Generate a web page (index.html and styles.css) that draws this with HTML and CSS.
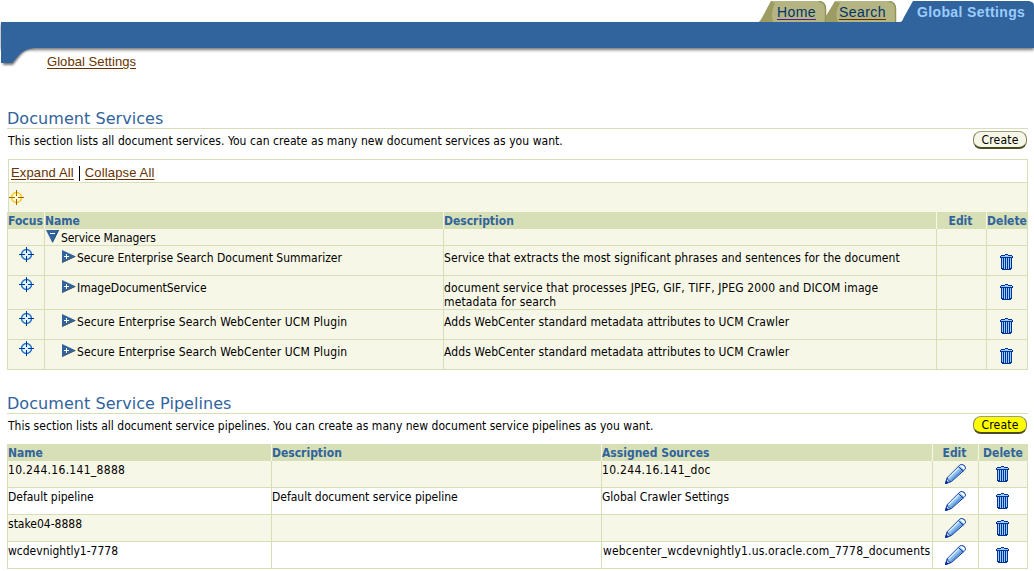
FILE: index.html
```
<!DOCTYPE html>
<html lang="en">
<head>
    <meta charset="UTF-8">
    <title>Global Settings</title>
    <link rel="stylesheet" href="styles.css">
</head>
<body>
    <!-- shared icons -->
    <svg class="defs" width="0" height="0">
        <symbol id="target" viewBox="0 0 15 15">
            <circle cx="7.5" cy="7.5" r="5" class="ring" stroke-width="1.4"/>
            <path d="M7.5 0v6M7.5 9v6M0 7.5h6M9 7.5h6" class="cross"/>
        </symbol>
        <symbol id="trash" viewBox="0 0 13 16">
            <g shape-rendering="crispEdges">
                <path d="M1 4h11v11h-1v1H2v-1H1z" fill="#003399"/>
                <path d="M2 4h1v10H2zM4 4h1v11H4zM6 4h1v11H6zM8 4h1v11H8zM10 4h1v10h-1z" fill="#99ccff"/>
                <path d="M5 0h3v1h4v1h1v2H0V2h1V1h4z" fill="#003399"/>
                <path d="M1 2h11v1H1zM5 1h3v1H5z" fill="#99ccff"/>
            </g>
        </symbol>
        <symbol id="pencil" viewBox="0 0 21 20">
            <path d="M.5 19.500l1.800-6L14.500 1.300q1-.9 2.300-.8 3.400.4 3.700 3.200 0 1.300-.9 2.100L6.500 17.500z" fill="#8cbdf0" stroke="#10399c"/>
            <path d="M3.500 13.800L15 2.600" stroke="#d6ebff" stroke-width="1.500"/>
            <path d="M6 16.500L17.500 5.500" stroke="#5a94d6" stroke-width="1.500"/>
            <path d="M14.800 1.800q1-.9 2.200-.6 2.600.6 2.800 2.800 0 1-.8 1.700z" fill="#fff"/>
            <path d="M13.300 2.500l5 4.500" stroke="#10399c"/>
            <path d="M.8 19.200l1.500-5 1.200 2.300 2.500.8z" fill="#e7f3ff" stroke="#10399c" stroke-width=".8"/>
            <path d="M0 20l1-4 3 3z" fill="#003399"/>
        </symbol>
        <symbol id="plus" viewBox="0 0 14 13">
            <path d="M0 0L14 6.500L0 13z" fill="#31639c"/>
            <path d="M0 12.500L13 6.500" stroke="#4a5a6b"/>
            <path d="M2 6.500h5M4.500 4v5" stroke="#fff"/>
        </symbol>
        <symbol id="minus" viewBox="0 0 13 13">
            <path d="M0 0H13L6.500 13z" fill="#31639c"/>
            <path d="M12.500 0L6.500 12" stroke="#214a7b"/>
            <path d="M4 3.500h5" stroke="#fff"/>
        </symbol>
    </svg>

    <div class="tabs">
        <a class="tab home" href="#">
            <svg width="68" height="21"><path d="M0 21Q2 19 3 17L12 0H60Q67 1 67 8V21z" fill="#b5b584"/><path d="M0 21Q2 19 3 17L12 0L16 2Q11 12 14 21z" fill="#9c9c63"/><path d="M60 .5Q66.500 1 66.500 8V21" fill="none" stroke="#94945a" stroke-width="1.500"/></svg>
            <span>Home</span>
        </a>
        <a class="tab search" href="#">
            <svg width="71" height="21"><path d="M0 21V15L4 9L11 0H63Q70 1 70 8V21z" fill="#b5b584"/><path d="M0 21V15L3 10L9 0L14 2Q8 12 12 21z" fill="#9c9c63"/><path d="M63 .5Q69.500 1 69.500 8V21" fill="none" stroke="#94945a" stroke-width="1.500"/></svg>
            <span>Search</span>
        </a>
        <a class="tab current" href="#">
            <svg width="133" height="21"><path d="M0 21Q2 19 3 16L12 0H128Q133 1 133 4V21z" fill="#31639c"/></svg>
            <span>Global Settings</span>
        </a>
    </div>
    <div class="band"></div>
    <div class="crumbs">
        <svg class="corner" width="36" height="20">
            <defs><filter id="soft"><feGaussianBlur stdDeviation="1.200"/></filter></defs>
            <path d="M2 0H36Q26 0 20 7Q15 13 12 17H2z" fill="#777" filter="url(#soft)"/>
            <path d="M0 0H33Q23 1 17 8Q13 13 11 15H0z" fill="#31639c"/>
        </svg>
        <a href="#">Global Settings</a>
    </div>

    <div class="section services">
        <h2>Document Services</h2>
        <div class="intro">
            <p>This section lists all document services. You can create as many new document services as you want.</p>
            <button>Create</button>
        </div>
        <div class="tree-bar"><a href="#">Expand All</a><i></i><a href="#">Collapse All</a></div>
        <div class="focus-bar"><svg class="target gold" width="15" height="15"><use href="#target"/></svg></div>
        <table>
            <colgroup><col class="s1"><col class="s2"><col class="s3"><col class="s4"><col class="s5"></colgroup>
            <tr><th class="first">Focus</th><th>Name</th><th>Description</th><th class="mid">Edit</th><th class="mid">Delete</th></tr>
            <tr class="root">
                <td></td>
                <td><div class="node"><svg width="13" height="13"><use href="#minus"/></svg><span>Service Managers</span></div></td>
                <td></td><td></td><td></td>
            </tr>
            <tr>
                <td class="mid"><svg class="target" width="15" height="15"><use href="#target"/></svg></td>
                <td><div class="node child"><svg width="14" height="13"><use href="#plus"/></svg><span>Secure Enterprise Search Document Summarizer</span></div></td>
                <td><p>Service that extracts the most significant phrases and sentences for the document</p></td>
                <td></td>
                <td class="mid"><svg class="trash" width="13" height="16"><use href="#trash"/></svg></td>
            </tr>
            <tr class="tall">
                <td class="mid"><svg class="target" width="15" height="15"><use href="#target"/></svg></td>
                <td><div class="node child"><svg width="14" height="13"><use href="#plus"/></svg><span>ImageDocumentService</span></div></td>
                <td><p class="wide">document service that processes JPEG, GIF, TIFF, JPEG 2000 and DICOM image<br>metadata for search</p></td>
                <td></td>
                <td class="mid"><svg class="trash" width="13" height="16"><use href="#trash"/></svg></td>
            </tr>
            <tr>
                <td class="mid"><svg class="target" width="15" height="15"><use href="#target"/></svg></td>
                <td><div class="node child"><svg width="14" height="13"><use href="#plus"/></svg><span class="wide">Secure Enterprise Search WebCenter UCM Plugin</span></div></td>
                <td><p>Adds WebCenter standard metadata attributes to UCM Crawler</p></td>
                <td></td>
                <td class="mid"><svg class="trash" width="13" height="16"><use href="#trash"/></svg></td>
            </tr>
            <tr>
                <td class="mid"><svg class="target" width="15" height="15"><use href="#target"/></svg></td>
                <td><div class="node child"><svg width="14" height="13"><use href="#plus"/></svg><span class="wide">Secure Enterprise Search WebCenter UCM Plugin</span></div></td>
                <td><p>Adds WebCenter standard metadata attributes to UCM Crawler</p></td>
                <td></td>
                <td class="mid"><svg class="trash" width="13" height="16"><use href="#trash"/></svg></td>
            </tr>
        </table>
    </div>

    <div class="section pipelines">
        <h2>Document Service Pipelines</h2>
        <div class="intro">
            <p>This section lists all document service pipelines. You can create as many new document service pipelines as you want.</p>
            <button class="marked">Create</button>
        </div>
        <table>
            <colgroup><col class="p1"><col class="p2"><col class="p3"><col class="p4"><col class="p5"></colgroup>
            <tr><th class="first">Name</th><th>Description</th><th>Assigned Sources</th><th class="mid">Edit</th><th class="mid">Delete</th></tr>
            <tr>
                <td class="num">10.244.16.141_8888</td><td></td><td class="num">10.244.16.141_doc</td>
                <td class="mid"><svg class="pencil" width="21" height="20"><use href="#pencil"/></svg></td>
                <td class="mid"><svg class="trash" width="13" height="16"><use href="#trash"/></svg></td>
            </tr>
            <tr>
                <td>Default pipeline</td><td>Default document service pipeline</td><td>Global Crawler Settings</td>
                <td class="mid"><svg class="pencil" width="21" height="20"><use href="#pencil"/></svg></td>
                <td class="mid"><svg class="trash" width="13" height="16"><use href="#trash"/></svg></td>
            </tr>
            <tr>
                <td>stake04-8888</td><td></td><td></td>
                <td class="mid"><svg class="pencil" width="21" height="20"><use href="#pencil"/></svg></td>
                <td class="mid"><svg class="trash" width="13" height="16"><use href="#trash"/></svg></td>
            </tr>
            <tr>
                <td>wcdevnightly1-7778</td><td></td><td class="long">webcenter_wcdevnightly1.us.oracle.com_7778_documents</td>
                <td class="mid"><svg class="pencil" width="21" height="20"><use href="#pencil"/></svg></td>
                <td class="mid"><svg class="trash" width="13" height="16"><use href="#trash"/></svg></td>
            </tr>
        </table>
    </div>
</body>
</html>
```
FILE: styles.css
```
* {
    box-sizing: border-box;
}

body {
    margin: 0;
    height: 571px;
    overflow: hidden;
    background: #fff;
    color: #000;
    font: 12px/14px "DejaVu Sans Condensed", "DejaVu Sans", sans-serif;
    font-stretch: condensed;
}

svg {
    display: block;
}

p {
    margin: 0;
}

.defs {
    position: absolute;
}

a {
    color: #663300;
    font-family: "Liberation Sans", Arial, sans-serif;
    text-underline-offset: 2px;
}

/* tabs and blue band */
.tabs {
    display: flex;
    height: 22px;
    padding: 1px 0 0 759px;
}

.tab {
    position: relative;
    height: 21px;
    font-size: 14px;
    line-height: 22px;
    color: #003366;
    white-space: nowrap;
}

.tab svg {
    position: absolute;
    left: 0;
    top: 0;
}

.tab span {
    position: relative;
}

.home {
    width: 67px;
    padding-left: 18px;
    letter-spacing: .4px;
    text-decoration-color: #551a8b;
}

.search {
    width: 75px;
    padding-left: 13px;
    letter-spacing: .45px;
    text-decoration-color: #663300;
}

.current {
    width: 133px;
    padding-left: 16px;
    color: #99ccff;
    font-weight: bold;
    letter-spacing: .37px;
    text-decoration: none;
}

.band {
    height: 26px;
    margin-left: 1px;
    background: #31639c;
    box-shadow: 0 2px 3px #777;
}

.crumbs {
    position: relative;
    height: 60px;
    padding: 6px 0 0 47px;
    font-size: 13px;
    line-height: 15px;
    letter-spacing: .06px;
}

.corner {
    position: absolute;
    left: 1px;
    top: 0;
}

/* sections */
.section {
    width: 1021px;
    margin-left: 7px;
}

.services {
    height: 285px;
}

h2 {
    height: 21px;
    margin: 0;
    border-bottom: 1px solid #d6dfb5;
    color: #31639c;
    font-family: "DejaVu Sans", sans-serif;
    font-size: 16px;
    font-stretch: normal;
    font-weight: normal;
    line-height: 22px;
    letter-spacing: .05px;
}

.intro {
    display: flex;
    justify-content: space-between;
    height: 30px;
    padding: 2px 1px 0 1px;
}

.intro p {
    padding-top: 3px;
    letter-spacing: .05px;
    white-space: nowrap;
}

.pipelines .intro p {
    letter-spacing: .025px;
}

button {
    width: 54px;
    height: 18px;
    padding: 0;
    border: 1px solid #84845a;
    border-top-color: #9c9c84;
    border-bottom: 2px solid #4a4a21;
    border-radius: 8px;
    background: #f7f7e7;
    color: #000;
    font: inherit;
    line-height: 14px;
    letter-spacing: .2px;
}

button.marked {
    background: #ffff00;
}

.tree-bar {
    display: flex;
    height: 24px;
    margin-left: 1px;
    padding: 5px 0 0 2px;
    border: 1px solid #d6dfb5;
    font-size: 13px;
    line-height: 16px;
    letter-spacing: .14px;
}

.tree-bar i {
    width: 1px;
    height: 15px;
    margin: 1px 5px 0;
    background: #000;
}

.focus-bar {
    height: 29px;
    margin-left: 1px;
    padding-top: 7px;
    border: solid #d6dfb5;
    border-width: 0 1px;
    background: #f7f7e7;
}

.target {
    margin: 1px auto 0;
}

.focus-bar .target {
    margin: 0;
}

.ring {
    fill: var(--ring-fill, #dff3ff);
    stroke: var(--ring, #2173c6);
}

.cross {
    stroke: var(--cross, #003399);
}

.gold {
    --ring-fill: #ffffce;
    --ring: #ffc629;
    --cross: #9c6300;
}

table {
    width: 1021px;
    table-layout: fixed;
    border-collapse: separate;
    border-spacing: 0;
}

th {
    height: 17px;
    padding: 0;
    border-right: 1px solid #f7f7e7;
    background: #d6dfb5;
    color: #31639c;
    text-align: left;
    white-space: nowrap;
}

th.first {
    padding-left: 1px;
}

th:last-child {
    border-right-color: #d6dfb5;
}

td {
    padding: 0;
    border: solid #d6dfb5;
    border-width: 0 1px 1px 0;
    background: #f7f7e7;
    vertical-align: top;
    white-space: nowrap;
}

td:first-child {
    border-left-width: 1px;
}

.mid {
    padding: 0 2px 0 0;
    text-align: center;
}

th.mid:last-child {
    padding: 0;
}

/* services table */
.s1 { width: 38px; }
.s2 { width: 399px; }
.s3 { width: 493px; }
.s4 { width: 50px; }
.s5 { width: 41px; }

.services td {
    height: 30px;
}

.services td:first-child {
    padding: 0;
}

.services .root td {
    height: 17px;
}

.services .tall td {
    height: 34px;
}

.services td p {
    padding-top: 5px;
    letter-spacing: .085px;
}

.services td p.wide {
    letter-spacing: .13px;
}

.node {
    display: flex;
    gap: 2px;
    padding: 1px 0 0 1px;
}

.root .node {
    letter-spacing: -.1px;
}

.child {
    gap: 1px;
    padding: 4px 0 0 17px;
}

.node span {
    padding-top: 1px;
    line-height: 14px;
}

.node .wide {
    letter-spacing: .13px;
}

.services .trash {
    margin: 8px auto 0;
}

/* pipelines table */
.p1 { width: 265px; }
.p2 { width: 330px; }
.p3 { width: 331px; }
.p4 { width: 46px; }
.p5 { width: 49px; }

.pipelines td {
    height: 27px;
    padding: 2px 0 0;
}

.pipelines td.num {
    letter-spacing: .3px;
}

.pipelines td.long {
    padding-left: 1px;
    letter-spacing: .17px;
}

.pipelines tr:nth-child(odd) td {
    background: #fff;
}

.pipelines td.mid {
    padding: 0;
}

.pipelines td.mid:last-child {
    padding-right: 2px;
}

.pencil {
    margin: 3px auto 0;
}

.pipelines .trash {
    margin: 5px auto 0;
}
```
